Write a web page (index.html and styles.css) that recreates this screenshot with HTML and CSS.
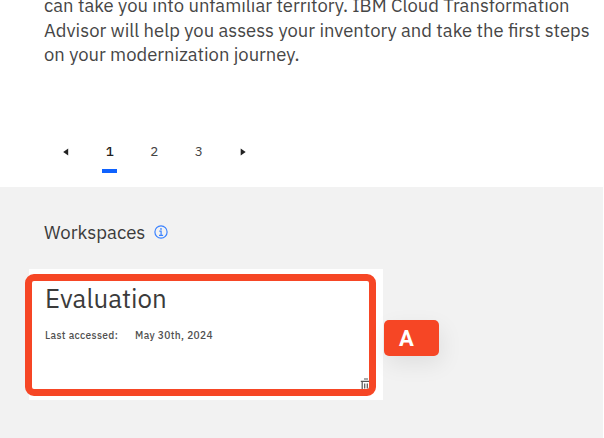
FILE: index.html
```
<!DOCTYPE html>
<html lang="en">
<head>
<meta charset="utf-8">
<title>Transformation Advisor</title>
<link rel="stylesheet" href="styles.css">
</head>
<body>
<main class="page">
  <section class="intro">
    <p class="copy">
      <span class="line">can take you into unfamiliar territory. IBM Cloud Transformation</span>
      <span class="line">Advisor will help you assess your inventory and take the first steps</span>
      <span class="line">on your modernization journey.</span>
    </p>
    <nav class="pager">
      <span class="step"><svg width="6" height="8" viewBox="0 0 6 8"><path d="M5.2 .5v7L.2 4z"/></svg></span>
      <span class="step current">1</span>
      <span class="step">2</span>
      <span class="step">3</span>
      <span class="step"><svg width="6" height="8" viewBox="0 0 6 8"><path d="M.7 .5v7L5.7 4z"/></svg></span>
    </nav>
  </section>
  <section class="workspaces">
    <header class="heading">
      <h2 class="title">Workspaces</h2>
      <svg class="info" width="14" height="14" viewBox="0 0 14 14"><circle cx="7" cy="7" r="6.1"/><path d="M5.3 6.1H7.1V10.2M5 10.3H9.1"/><circle class="dot" cx="7" cy="3.9" r=".85"/></svg>
    </header>
    <article class="card">
      <h3 class="name">Evaluation</h3>
      <div class="meta"><span class="label">Last accessed:</span><span class="date">May 30th, 2024</span></div>
      <svg class="trash" width="12" height="14" viewBox="0 0 12 14"><path d="M.8 3.3H11.2M4 1H8M2.2 3.3V12.8H9.8V3.3M4.7 5.5V10.5M7.3 5.5V10.5"/></svg>
      <div class="outline"></div>
      <div class="marker">A</div>
    </article>
  </section>
</main>
</body>
</html>
```
FILE: styles.css
```
* { box-sizing: border-box; }
body { margin: 0; background: #fff; color: #3b3b3b; font-family: "IBM Plex Sans", Roboto, sans-serif; }
.page { display: flex; flex-direction: column; width: 604px; height: 438px; overflow: hidden; }
.intro { height: 187px; padding-left: 44px; }
.copy { margin: -7px 0 0; height: 74px; font-size: 18.43px; line-height: 24px; color: #464646; }
.line { display: block; width: max-content; white-space: nowrap; }
.line:first-child { height: 25px; }
.pager { display: flex; margin-top: 64px; margin-left: -.7px; height: 42px; }
.step { display: flex; justify-content: center; width: 44.4px; height: 42px; line-height: 40px; font-size: 13.5px; color: #444; }
.step svg { margin-top: 17px; fill: #222; }
.current { font-weight: 500; color: #222; position: relative; }
.current::after { content: ""; position: absolute; left: 14.3px; top: 38px; width: 15px; height: 4px; background: #0f62fe; }
.workspaces { width: 603px; height: 251px; padding: 33px 0 0 29px; background: #f2f2f2; }
.heading { display: flex; align-items: center; height: 24px; padding-left: 15px; }
.title { margin: -1px 0 0; width: 110px; font-size: 18.6px; line-height: 24px; font-weight: 400; }
.info { fill: none; stroke: #3b82ff; stroke-width: 1.2; }
.info .dot { fill: #3b82ff; stroke: none; }
.card { position: relative; width: 354px; height: 131px; margin-top: 25px; padding: 13px 0 0 16px; background: #fff; }
.name { margin: 0; width: max-content; font-size: 25.9px; line-height: 32px; font-weight: 400; }
.meta { display: flex; margin-top: 15px; font-size: 10.2px; line-height: 14px; font-weight: 500; color: #505050; white-space: nowrap; letter-spacing: .35px; }
.label { width: 90px; }
.trash { position: absolute; left: 331px; top: 109px; fill: none; stroke: #555; stroke-width: 1.2; }
.outline { position: absolute; left: -4px; top: 4.5px; width: 350.5px; height: 122.5px; border: 7px solid #f64625; border-radius: 9px; }
.marker { position: absolute; left: 355px; top: 51px; width: 55px; height: 36px; padding-right: 10px; border-radius: 5px; background: #f64625; box-shadow: 3px 8px 22px rgba(0,0,0,.08); color: #fff; font-family: Roboto, sans-serif; font-size: 22px; font-weight: 700; line-height: 37px; text-align: center; }
```
